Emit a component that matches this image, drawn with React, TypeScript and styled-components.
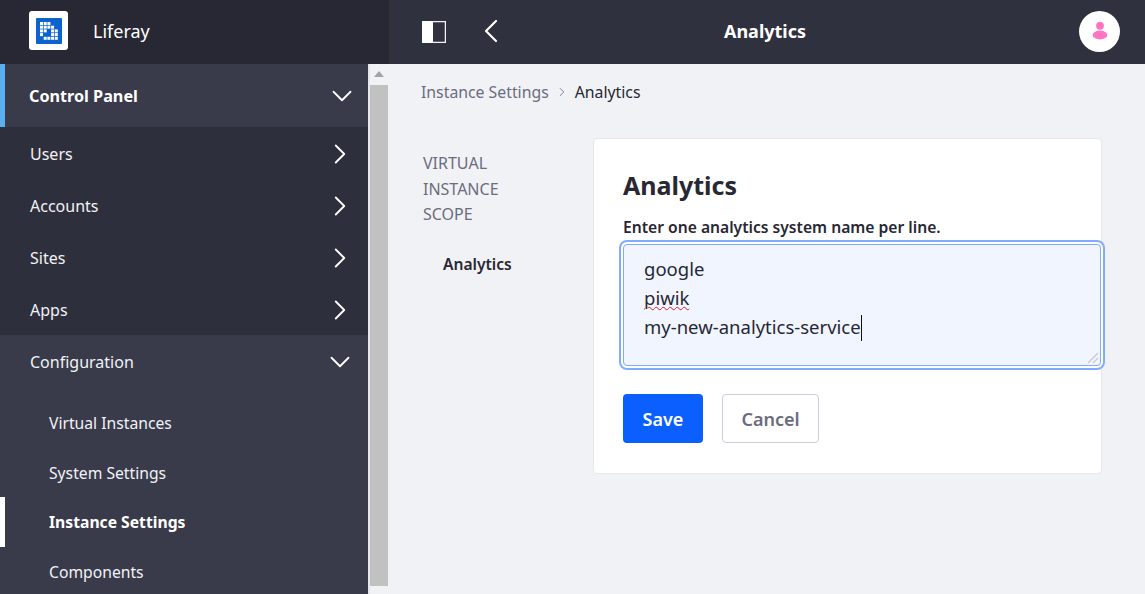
import React from "react";
import styled, { createGlobalStyle } from "styled-components";
import { ChevronDown, ChevronRight, ChevronLeft } from "lucide-react";

const GlobalStyle = createGlobalStyle`
  html, body {
    margin: 0;
    padding: 0;
    height: 100%;
    overflow: hidden;
    background: #f1f2f5;
    font-family: "Noto Sans", "Open Sans", sans-serif;
  }
  * { box-sizing: border-box; }
`;

const Page = styled.div`
  width: 1145px;
  height: 594px;
  display: flex;
  flex-flow: column;
  overflow: hidden;
`;

const Header = styled.header`
  height: 64px;
  flex: none;
  display: flex;
  background: #30313f;
  color: #fff;
`;

const Brand = styled.div`
  width: 389px;
  flex: none;
  display: flex;
  align-items: center;
  padding-left: 29px;
  gap: 25px;
  background: #272833;
  font-size: 18px;
  padding-bottom: 3px;
`;

const LogoBox = styled.div`
  width: 39px;
  height: 39px;
  border-radius: 3px;
  background: #fff;
  display: flex;
  align-items: center;
  justify-content: center;
`;

const TopBar = styled.div`
  flex: 1;
  display: flex;
  align-items: center;
  padding: 0 25px 0 33px;
`;

const TopTitle = styled.div`
  flex: 1;
  text-align: center;
  font-size: 18px;
  font-weight: 700;
  padding-right: 60px;
  padding-bottom: 3px;
`;

const BackButton = styled.div`
  margin-left: 25px;
  width: 40px;
  flex: none;
  display: flex;
  justify-content: center;
  margin-bottom: 2px;
`;

const Avatar = styled.div`
  width: 41px;
  height: 41px;
  border-radius: 50%;
  background: #fff;
  display: flex;
  align-items: center;
  justify-content: center;
  margin-bottom: 2px;
`;

const Body = styled.div`
  flex: 1;
  display: flex;
  min-height: 0;
`;

const Sidebar = styled.nav`
  width: 368px;
  flex: none;
  background: #2e2f3c;
  color: #fff;
  display: flex;
  flex-flow: column;
`;

const PanelRow = styled.div`
  height: 63px;
  flex: none;
  display: flex;
  align-items: center;
  justify-content: space-between;
  padding: 0 9px 0 24px;
  background: #393a4a;
  border-left: 5px solid #5aaef2;
  font-size: 16.2px;
  font-weight: 700;
`;

const MenuRow = styled.div`
  height: 52px;
  flex: none;
  display: flex;
  align-items: center;
  justify-content: space-between;
  padding: 2px 11px 0 30px;
  font-size: 16px;
  color: #f1f2f5;
`;

const ConfigGroup = styled.div`
  flex: 1;
  background: #393a4a;
`;

const SubList = styled.div`
  display: flex;
  flex-flow: column;
  padding-top: 11px;
`;

const SubRow = styled.div<{ $active?: boolean }>`
  height: 49.7px;
  flex: none;
  display: flex;
  align-items: center;
  padding-left: ${(p) => (p.$active ? "44px" : "49px")};
  font-size: 15.7px;
  font-weight: ${(p) => (p.$active ? 700 : 400)};
  border-left: ${(p) => (p.$active ? "5px solid #fff" : "none")};
  color: ${(p) => (p.$active ? "#fff" : "#f1f2f5")};
`;

const Scrollbar = styled.div`
  width: 21px;
  flex: none;
  background: #f1f2f5;
  border-left: 2px solid #e6e7ec;
  border-right: 1px solid #f1f2f5;
  display: flex;
  flex-flow: column;
  padding-bottom: 8px;
`;

const ScrollUp = styled.div`
  height: 21px;
  flex: none;
  display: flex;
  justify-content: center;
  padding-top: 7px;
  &::before {
    content: "";
    width: 0;
    height: 0;
    border-left: 5px solid transparent;
    border-right: 5px solid transparent;
    border-bottom: 6px solid #a3a3a3;
  }
`;

const ScrollThumb = styled.div`
  flex: 1;
  background: #c1c1c1;
`;

const Main = styled.main`
  flex: 1;
  min-width: 0;
  background: #f1f2f5;
  padding: 16px 43px 0 32px;
`;

const Breadcrumb = styled.div`
  display: flex;
  align-items: center;
  height: 23px;
  font-size: 15.8px;
  color: #6b6c7e;
  gap: 6px;
  b {
    font-weight: 400;
    color: #272833;
  }
`;

const Columns = styled.div`
  display: flex;
  margin-top: 35px;
`;

const SideNav = styled.div`
  width: 172px;
  flex: none;
  padding: 13px 0 0 2px;
`;

const ScopeTitle = styled.div`
  font-size: 16px;
  line-height: 25.5px;
  color: #6b6c7e;
  text-transform: uppercase;
`;

const SideLink = styled.div`
  margin: 24px 0 0 20px;
  font-size: 15.6px;
  font-weight: 600;
  line-height: 24px;
  color: #272833;
`;

const Card = styled.section`
  width: 509px;
  height: 336px;
  flex: none;
  background: #fff;
  border: 1px solid #e7e7ed;
  border-radius: 4px;
  padding: 28px 0 0 29px;
`;

const Title = styled.h2`
  margin: 0;
  font-size: 25px;
  line-height: 36px;
  font-weight: 700;
  color: #272833;
`;

const Label = styled.div`
  margin-top: 13px;
  font-size: 15.65px;
  line-height: 22px;
  font-weight: 600;
  color: #272833;
`;

const TextBox = styled.div`
  position: relative;
  width: 478px;
  height: 122px;
  margin-top: 6px;
  padding: 9px 20px;
  background: #f0f5ff;
  border: 1px solid #80acff;
  border-radius: 4px;
  box-shadow: 0 0 0 2px #fff, 0 0 0 4px #80acff;
  font-size: 18.5px;
  line-height: 29px;
  color: #272833;
`;

const Line = styled.div`
  white-space: nowrap;
  height: 29px;
`;

const Misspelled = styled.span`
  text-decoration: underline wavy #e01e22 1px;
  text-underline-offset: 1px;
`;

const Caret = styled.span`
  display: inline-block;
  width: 1px;
  height: 26px;
  background: #111;
  vertical-align: -7px;
`;

const ResizeGrip = styled.svg`
  position: absolute;
  right: 1px;
  bottom: 1px;
`;

const Actions = styled.div`
  display: flex;
  gap: 19px;
  margin-top: 28px;
`;

const Button = styled.button<{ $primary?: boolean }>`
  height: 49px;
  padding: 0;
  width: ${(p) => (p.$primary ? "80px" : "97px")};
  border-radius: 4px;
  border: ${(p) => (p.$primary ? "none" : "1.5px solid #cdced9")};
  background: ${(p) => (p.$primary ? "#0b5fff" : "#fff")};
  color: ${(p) => (p.$primary ? "#fff" : "#6b6c7e")};
  font-family: inherit;
  font-size: 18px;
  font-weight: 600;
`;

const LiferayLogo = () => {
  const cells = [
    [0, 0], [1, 0], [2, 0],
    [0, 1], [1, 1], [2, 1], [3, 1],
    [0, 2], [1, 2], [3, 2], [4, 2],
    [0, 3], [3, 3], [4, 3],
    [1, 4], [2, 4], [3, 4], [4, 4],
  ];
  return (
    <svg width="26" height="26" viewBox="0 0 26 26">
      <rect width="26" height="26" rx="1" fill="#0b63ce" />
      {cells.map(([x, y]) => (
        <rect key={`${x}-${y}`} x={4 + x * 3.7} y={4 + y * 3.7} width="3" height="3" fill="#fff" />
      ))}
    </svg>
  );
};

const PanelToggleIcon = () => (
  <svg width="24" height="22" viewBox="0 0 24 22">
    <rect x="0.5" y="0.5" width="23" height="21" fill="#30313f" stroke="#f1f2f5" strokeWidth="1.5" />
    <rect x="0" y="0" width="11" height="22" fill="#fff" />
  </svg>
);

const UserIcon = () => (
  <svg width="18" height="18" viewBox="0 0 18 18">
    <circle cx="9" cy="3.8" r="3.9" fill="#ff73c3" />
    <ellipse cx="9" cy="13" rx="7.4" ry="4.4" fill="#ff73c3" />
  </svg>
);

const menuItems = ["Users", "Accounts", "Sites", "Apps"];
const subItems = ["Virtual Instances", "System Settings", "Instance Settings", "Components"];

export default function App() {
  return (
    <Page>
      <GlobalStyle />
      <Header>
        <Brand>
          <LogoBox>
            <LiferayLogo />
          </LogoBox>
          Liferay
        </Brand>
        <TopBar>
          <PanelToggleIcon />
          <BackButton>
            <ChevronLeft size={40} strokeWidth={1.3} color="#fff" />
          </BackButton>
          <TopTitle>Analytics</TopTitle>
          <Avatar>
            <UserIcon />
          </Avatar>
        </TopBar>
      </Header>
      <Body>
        <Sidebar>
          <PanelRow>
            Control Panel
            <ChevronDown size={34} strokeWidth={1.3} color="#fff" />
          </PanelRow>
          {menuItems.map((item) => (
            <MenuRow key={item}>
              {item}
              <ChevronRight size={34} strokeWidth={1.3} color="#fff" />
            </MenuRow>
          ))}
          <ConfigGroup>
            <MenuRow>
              Configuration
              <ChevronDown size={34} strokeWidth={1.3} color="#fff" />
            </MenuRow>
            <SubList>
              {subItems.map((item) => (
                <SubRow key={item} $active={item === "Instance Settings"}>
                  {item}
                </SubRow>
              ))}
            </SubList>
          </ConfigGroup>
        </Sidebar>
        <Scrollbar>
          <ScrollUp />
          <ScrollThumb />
        </Scrollbar>
        <Main>
          <Breadcrumb>
            Instance Settings
            <ChevronRight size={14} strokeWidth={1.5} color="#6b6c7e" />
            <b>Analytics</b>
          </Breadcrumb>
          <Columns>
            <SideNav>
              <ScopeTitle>
                Virtual
                <br />
                Instance
                <br />
                Scope
              </ScopeTitle>
              <SideLink>Analytics</SideLink>
            </SideNav>
            <Card>
              <Title>Analytics</Title>
              <Label>Enter one analytics system name per line.</Label>
              <TextBox>
                <Line>google</Line>
                <Line>
                  <Misspelled>piwik</Misspelled>
                </Line>
                <Line>
                  my-new-analytics-service
                  <Caret />
                </Line>
                <ResizeGrip width="12" height="12" viewBox="0 0 12 12">
                  <path d="M1 11 L11 1 M6 11 L11 6" stroke="#c4c6d0" strokeWidth="1.2" fill="none" />
                </ResizeGrip>
              </TextBox>
              <Actions>
                <Button $primary>Save</Button>
                <Button>Cancel</Button>
              </Actions>
            </Card>
          </Columns>
        </Main>
      </Body>
    </Page>
  );
}
